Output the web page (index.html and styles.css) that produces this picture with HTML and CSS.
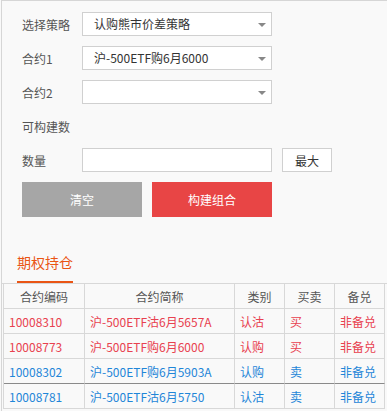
FILE: index.html
```html
<!DOCTYPE html>
<html lang="zh">
<head>
    <meta charset="UTF-8">
    <title>期权组合</title>
    <link rel="stylesheet" href="styles.css">
</head>
<body>
<div class="panel">
    <div class="form">
        <div class="row">
            <label>选择策略</label>
            <div class="select">认购熊市价差策略<span class="arrow"></span></div>
        </div>
        <div class="row">
            <label>合约1</label>
            <div class="select">沪-500ETF购6月6000<span class="arrow"></span></div>
        </div>
        <div class="row">
            <label>合约2</label>
            <div class="select"><span class="arrow"></span></div>
        </div>
        <div class="row">
            <label>可构建数</label>
        </div>
        <div class="row">
            <label>数量</label>
            <input class="num" type="text">
            <button class="btn-max">最大</button>
        </div>
        <div class="actions">
            <button class="btn-clear">清空</button>
            <button class="btn-build">构建组合</button>
        </div>
    </div>

    <div class="tabs">
        <span class="tab">期权持仓</span>
    </div>

    <table class="grid">
        <thead>
            <tr>
                <th class="c1">合约编码</th>
                <th class="c2">合约简称</th>
                <th class="c3">类别</th>
                <th class="c3">买卖</th>
                <th class="c3">备兑</th>
            </tr>
        </thead>
        <tbody>
            <tr class="red">
                <td>10008310</td>
                <td>沪-500ETF沽6月5657A</td>
                <td>认沽</td>
                <td>买</td>
                <td>非备兑</td>
            </tr>
            <tr class="red">
                <td>10008773</td>
                <td>沪-500ETF购6月6000</td>
                <td>认购</td>
                <td>买</td>
                <td>非备兑</td>
            </tr>
            <tr class="blue split">
                <td>10008302</td>
                <td>沪-500ETF购6月5903A</td>
                <td>认购</td>
                <td>卖</td>
                <td>非备兑</td>
            </tr>
            <tr class="blue">
                <td>10008781</td>
                <td>沪-500ETF沽6月5750</td>
                <td>认沽</td>
                <td>卖</td>
                <td>非备兑</td>
            </tr>
        </tbody>
    </table>
</div>
</body>
</html>
```

FILE: styles.css
```css
html {
    background-color: #f9f9f9;
}
body {
    margin: 0;
    font-family: "Noto Sans CJK SC", "Noto Sans", sans-serif;
    font-size: 12px;
    color: #555;
}
.panel {
    margin-left: 1px;
    border-top: 1px solid #d6d6d6;
    border-left: 1px solid #d6d6d6;
    height: 410px;
    overflow: hidden;
}
.form {
    padding: 11px 0 0 20px;
}
.row {
    display: flex;
    align-items: center;
    height: 24px;
    margin-bottom: 10px;
}
.row label {
    width: 60px;
}
.select {
    position: relative;
    box-sizing: border-box;
    width: 190px;
    height: 24px;
    line-height: 22px;
    padding-left: 11px;
    background-color: white;
    border: 1px solid #d0d0d0;
    color: #333;
}
.arrow {
    position: absolute;
    right: 5px;
    top: 10px;
    border-left: 4px solid transparent;
    border-right: 4px solid transparent;
    border-top: 4px solid #888;
}
.num {
    box-sizing: border-box;
    width: 190px;
    height: 24px;
    margin: 0;
    border: 1px solid #d0d0d0;
    background-color: white;
}
button {
    font-family: inherit;
    font-size: 12px;
    margin: 0;
    cursor: pointer;
}
.btn-max {
    box-sizing: border-box;
    margin-left: 10px;
    width: 50px;
    height: 24px;
    padding: 0;
    background-color: white;
    border: 1px solid #d0d0d0;
    color: #333;
}
.actions {
    display: flex;
    gap: 10px;
}
.actions button {
    width: 120px;
    height: 35px;
    border: none;
    color: white;
}
.btn-clear {
    background-color: #a6a6a6;
}
.btn-build {
    background-color: #e84545;
}
.tabs {
    margin-top: 32px;
    padding-left: 15px;
    border-bottom: 1px solid #d8d8d8;
    display: flex;
}
.tab {
    display: block;
    font-size: 14px;
    line-height: 27px;
    padding-bottom: 5px;
    border-bottom: 2px solid #ea5514;
    color: #ea5514;
}
.grid {
    margin-left: 1px;
    table-layout: fixed;
    border-collapse: separate;
    border-spacing: 0;
    border-left: 1px solid #d8d8d8;
}
.grid th, .grid td {
    height: 24px;
    padding: 0 5px;
    border-right: 1px solid #d8d8d8;
    border-bottom: 1px solid #d8d8d8;
    white-space: nowrap;
    overflow: hidden;
    text-align: left;
    font-weight: normal;
}
.grid th {
    text-align: center;
    color: #555;
}
.c1 { width: 70px; }
.c2 { width: 139px; }
.c3 { width: 39px; }
.red td {
    color: #e8414f;
}
.blue td {
    color: #1f86d8;
}
.split td {
    border-bottom-color: #8a8a8a;
}
```
